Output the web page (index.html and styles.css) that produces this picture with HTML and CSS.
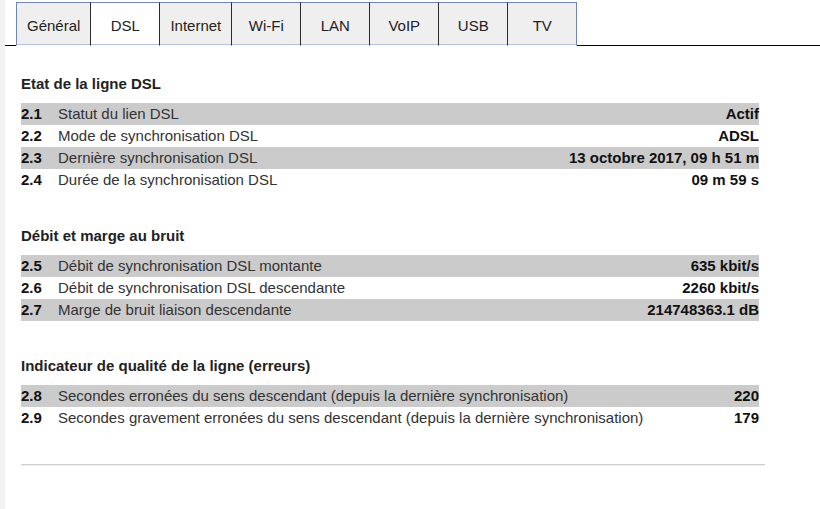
FILE: index.html
```html
<!DOCTYPE html>
<html lang="fr">
<head>
<meta charset="utf-8">
<title>DSL</title>
<link rel="stylesheet" href="styles.css">
</head>
<body>
<div class="page">
  <nav class="tabbar">
    <div class="tab first">Général</div>
    <div class="tab active">DSL</div>
    <div class="tab">Internet</div>
    <div class="tab">Wi-Fi</div>
    <div class="tab">LAN</div>
    <div class="tab">VoIP</div>
    <div class="tab">USB</div>
    <div class="tab last">TV</div>
  </nav>
  <main class="content">
    <section class="section">
      <h2 class="heading">Etat de la ligne DSL</h2>
      <div class="row shaded"><span class="num">2.1</span><span class="label">Statut du lien DSL</span><span class="value">Actif</span></div>
      <div class="row"><span class="num">2.2</span><span class="label">Mode de synchronisation DSL</span><span class="value">ADSL</span></div>
      <div class="row shaded"><span class="num">2.3</span><span class="label">Dernière synchronisation DSL</span><span class="value">13 octobre 2017, 09 h 51 m</span></div>
      <div class="row"><span class="num">2.4</span><span class="label">Durée de la synchronisation DSL</span><span class="value">09 m 59 s</span></div>
    </section>
    <section class="section">
      <h2 class="heading">Débit et marge au bruit</h2>
      <div class="row shaded"><span class="num">2.5</span><span class="label">Débit de synchronisation DSL montante</span><span class="value">635 kbit/s</span></div>
      <div class="row"><span class="num">2.6</span><span class="label">Débit de synchronisation DSL descendante</span><span class="value">2260 kbit/s</span></div>
      <div class="row shaded"><span class="num">2.7</span><span class="label">Marge de bruit liaison descendante</span><span class="value">214748363.1 dB</span></div>
    </section>
    <section class="section">
      <h2 class="heading">Indicateur de qualité de la ligne (erreurs)</h2>
      <div class="row shaded"><span class="num">2.8</span><span class="label">Secondes erronées du sens descendant (depuis la dernière synchronisation)</span><span class="value">220</span></div>
      <div class="row"><span class="num">2.9</span><span class="label">Secondes gravement erronées du sens descendant (depuis la dernière synchronisation)</span><span class="value">179</span></div>
    </section>
    <hr class="rule">
  </main>
</div>
</body>
</html>
```

FILE: styles.css
```css
html, body {
  margin: 0;
  padding: 0;
}
body {
  background: #f1f1f1;
  font-family: "Liberation Sans", Arial, sans-serif;
  font-size: 15px;
  color: #222;
}
.page {
  margin-left: 5px;
  background: #fff;
  min-height: 509px;
  padding-top: 2px;
  box-sizing: border-box;
}
.tabbar {
  display: flex;
  padding-left: 11px;
  border-bottom: 1px solid #000;
}
.tab {
  min-width: 48px;
  padding: 3px 10px 0 10px;
  height: 39px;
  line-height: 39px;
  text-align: center;
  background: #efefef;
  color: #222;
  border-top: 1px solid #7186b6;
  border-left: 1px solid #2b2b2b;
  border-bottom: 1px solid #fff;
  margin-bottom: -1px;
  box-shadow: inset 0 -1px 0 #b3c2df;
}
.tab.first {
  border-left-color: #7186b6;
}
.tab.last {
  border-right: 1px solid #7186b6;
}
.tab.active {
  background: #fff;
}
.content {
  padding: 0 0 0 16px;
  width: 744px;
}
.section {
  margin-top: 28px;
}
.section + .section {
  margin-top: 35px;
}
.heading {
  margin: 0 0 9px 0;
  font-size: 15px;
  line-height: 20px;
  font-weight: bold;
  color: #222;
}
.row {
  display: flex;
  width: 738px;
  height: 22px;
  line-height: 22px;
}
.row.shaded {
  background: #cbcbcb;
}
.num {
  width: 37px;
  flex: none;
  font-weight: bold;
  color: #111;
}
.label {
  flex: 1;
  color: #333;
  white-space: nowrap;
}
.value {
  font-weight: bold;
  color: #111;
  text-align: right;
  white-space: nowrap;
}
.rule {
  margin: 35px 0 0 0;
  height: 0;
  border: 0;
  border-top: 1px solid #d0d0d0;
  border-bottom: 1px solid #efefef;
  width: 744px;
}
```
